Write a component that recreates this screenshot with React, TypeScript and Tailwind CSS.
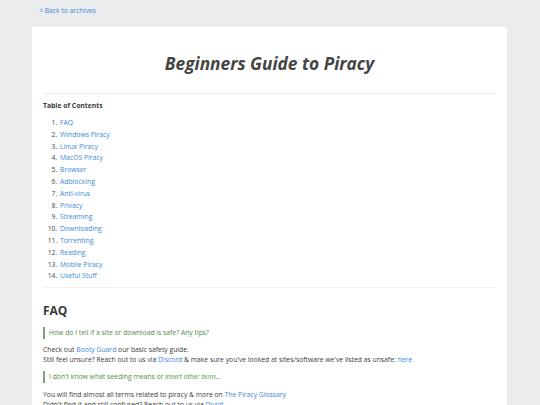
import React from "react";

const toc = [
  "FAQ",
  "Windows Piracy",
  "Linux Piracy",
  "MacOS Piracy",
  "Browser",
  "Adblocking",
  "Anti-virus",
  "Privacy",
  "Streaming",
  "Downloading",
  "Torrenting",
  "Reading",
  "Mobile Piracy",
  "Useful Stuff",
];

function A({ children }: { children: React.ReactNode }) {
  return <a className="text-[#3a8ad6]">{children}</a>;
}

export default function App() {
  return (
    <div className="min-h-screen bg-[#ebecee] font-['Open_Sans',sans-serif] text-[#3a3a3a]">
      <div className="pl-[39px] pt-[6px] h-[27px] text-[6.8px] leading-[10px] text-[#3a8ad6]">&lt; Back to archives</div>
      <div className="mx-[32px] w-[475px] bg-white px-[11px] pb-4">
        {/* title */}
        <h1 className="pt-[25px] mb-[17px] text-center text-[17.3px] leading-[24px] font-bold italic text-[#444]">
          Beginners Guide to Piracy
        </h1>
        <hr className="border-t border-[#f1f1f1]" />

        {/* table of contents */}
        <p className="mt-[7px] text-[6.8px] leading-[10px] font-bold">Table of Contents</p>
        <ol className="mt-[6px] pl-[16px] list-decimal text-[6.8px] leading-[11.8px] marker:text-[#444] pb-[5px]">
          {toc.map((t) => (
            <li key={t} className="pl-[1px]">
              <A>{t}</A>
            </li>
          ))}
        </ol>
        <hr className="border-t border-[#f1f1f1]" />

        {/* FAQ */}
        <h2 className="mt-[15px] text-[12px] font-bold leading-[16px]">FAQ</h2>
        <div className="mt-[8px] border-l-2 border-[#7aa874] pl-[4px] text-[6.8px] leading-[12px] text-[#4f8f45]">
          How do I tell if a site or download is safe? Any tips?
        </div>
        <p className="mt-[6px] text-[6.8px] leading-[10px]">
          Check out <A>Booty Guard</A> our basic safety guide.
          <br />
          Still feel unsure? Reach out to us via <A>Discord</A> &amp; make sure you've looked at sites/software we've listed as unsafe: <A>here</A>
        </p>
        <div className="mt-[6px] border-l-2 border-[#7aa874] pl-[4px] text-[6.8px] leading-[12px] text-[#4f8f45]">
          I don't know what seeding means or <em>insert other term...</em>
        </div>
        <p className="mt-[7px] text-[6.8px] leading-[10px]">
          You will find almost all terms related to piracy &amp; more on <A>The Piracy Glossary</A>
          <br />
          Didn't find it and still confused? Reach out to us via <A>Divolt</A>
        </p>
      </div>
    </div>
  );
}
